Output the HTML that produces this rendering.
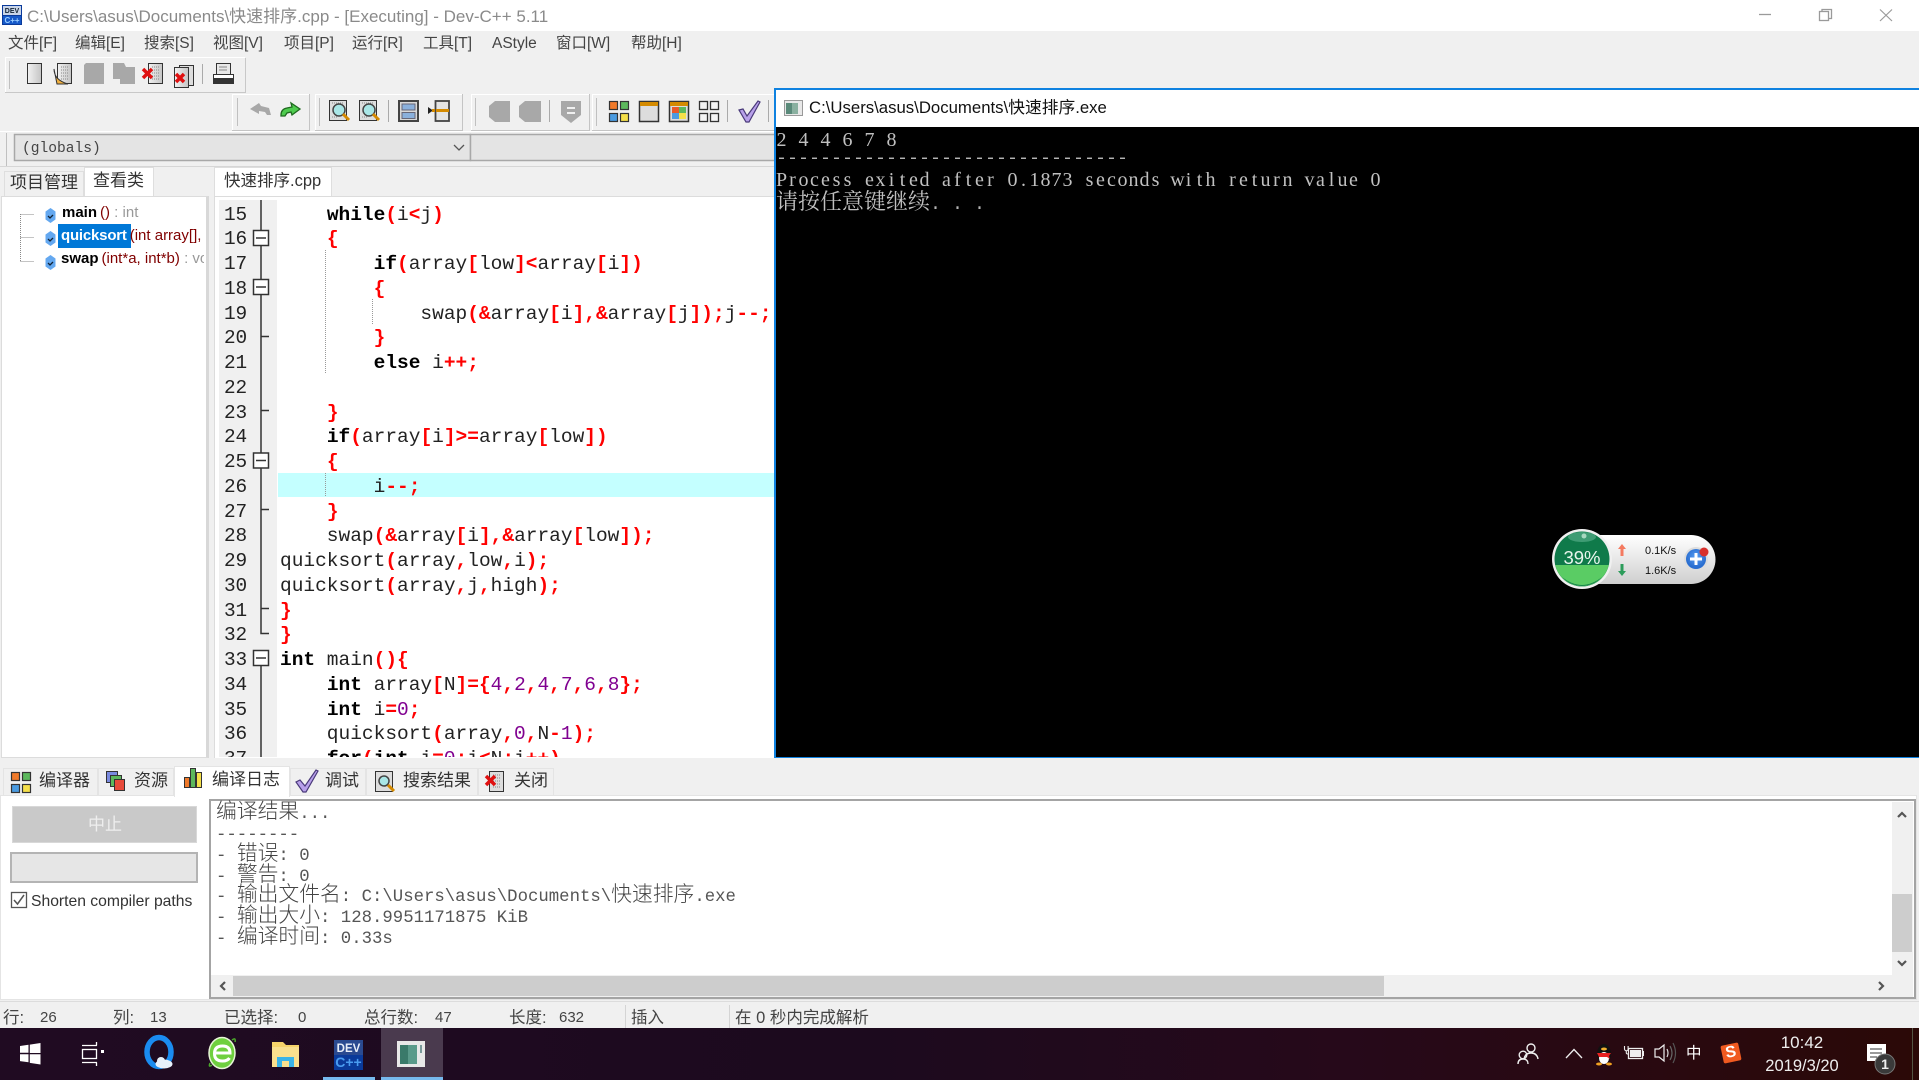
<!DOCTYPE html>
<html lang="zh"><head><meta charset="utf-8"><title>Dev-C++</title>
<style>
html,body{margin:0;padding:0;width:1919px;height:1080px;overflow:hidden;background:#f0f0f0}
body{position:relative;font-family:"Liberation Sans","Noto Sans CJK SC",sans-serif;color:#333}
.a{position:absolute;white-space:nowrap}
.t{position:absolute;white-space:nowrap;font-size:15.5px;line-height:20px;color:#444}
.tab{font-size:16.5px;color:#333}
.ln{position:absolute;left:224px;width:30px;font:19.4px/24.75px "Liberation Mono",monospace;color:#222;letter-spacing:-.1px}
.c{position:absolute;left:280px;white-space:pre;font:19.5px/24.75px "Liberation Mono",monospace;color:#222}
.c b{font-weight:bold;color:#000}.c i{font-style:normal;font-weight:bold;color:#f00}.c u{text-decoration:none;color:#800090}
.lg{position:absolute;left:216px;white-space:pre;font:17.33px/20.7px "Liberation Mono",monospace;color:#555}
.lg s{text-decoration:none;font-family:"Noto Sans CJK SC",sans-serif;font-size:20.8px;line-height:0;color:#444;font-weight:300}
.con{position:absolute;left:776px;white-space:pre;font:18.33px/22px "Liberation Mono",monospace;color:#b4b4b4}
.con s{text-decoration:none;font-family:"Noto Serif CJK SC",serif;font-size:22px;color:#c0c0c0}
.st{position:absolute;top:1007.500px;font-size:16.5px;line-height:20px;color:#444;white-space:nowrap}
.st.d{font-size:15px}
.box{position:absolute;box-sizing:border-box}
</style></head>
<body>
<!-- title bar -->
<div class="box" style="left:0;top:0;width:1919px;height:31px;background:#fff"></div>
<div class="t" style="left:27px;top:7px;font-size:17px;color:#8a8a8a">C:\Users\asus\Documents\快速排序.cpp - [Executing] - Dev-C++ 5.11</div>
<svg class="a" style="left:2px;top:5px" width="20" height="20"><rect width="20" height="20" fill="#0a3a9a"/><rect x="1" y="11" width="18" height="8" fill="#1659c9"/><rect x="1" y="1" width="18" height="9" fill="#c8d4e8"/><text x="10" y="8" font-size="7" font-weight="bold" fill="#123" text-anchor="middle" font-family="Liberation Sans">DEV</text><text x="10" y="18" font-size="8" font-weight="bold" fill="#9cf" text-anchor="middle" font-family="Liberation Sans">C++</text></svg>
<svg class="a" style="left:1750px;top:0" width="160" height="31" fill="none" stroke="#9a9a9a"><path d="M9 14.500h12" stroke-width="1.300"/><rect x="69.500" y="11.500" width="9" height="9" stroke-width="1.300"/><path d="M72 11V9.500h9.500V18.500H79" stroke-width="1.300"/><path d="M130 9.500l12 11.500M142 9.500l-12 11.500" stroke-width="1.200"/></svg>

<!-- menu -->
<div class="t" style="left:8px;top:34px">文件[F]</div><div class="t" style="left:75px;top:34px">编辑[E]</div><div class="t" style="left:144px;top:34px">搜索[S]</div><div class="t" style="left:213px;top:34px">视图[V]</div><div class="t" style="left:284px;top:34px">项目[P]</div><div class="t" style="left:352px;top:34px">运行[R]</div><div class="t" style="left:423px;top:34px">工具[T]</div><div class="t" style="left:492px;top:34px">AStyle</div><div class="t" style="left:556px;top:34px">窗口[W]</div><div class="t" style="left:631px;top:34px">帮助[H]</div>

<!-- toolbars -->
<svg class="a" style="left:0;top:0" width="800" height="170">
<defs>
<linearGradient id="dg" x1="0" x2="1"><stop offset="0" stop-color="#f2f2f2"/><stop offset="1" stop-color="#c4c4c4"/></linearGradient>
<g id="doc"><rect x=".5" y=".5" width="14" height="20" fill="url(#dg)" stroke="#333"/></g>
<g id="dots"><path d="M4 4h8M4 7h8M4 10h8M4 13h8M4 16h8" stroke="#888" stroke-dasharray="1 1"/></g>
<g id="dis"><path d="M0 2l2-2h18v21H0z" fill="#a8a8a8"/></g>
<g id="find"><rect x=".5" y=".5" width="17" height="20" fill="#ddd" stroke="#333"/><path d="M3 3h12M3 17h6" stroke="#888" stroke-dasharray="1 1"/><circle cx="10" cy="10" r="6" fill="#a9e6e6" stroke="#444" stroke-width="1.500"/><path d="M14 14l6 6" stroke="#d48a00" stroke-width="3"/></g>
</defs>
<!-- row 1 -->
<path d="M5.500 92V57.500H245" fill="none" stroke="#fff"/><path d="M5 92.500h240.500V58" fill="none" stroke="#c8c8c8"/>
<path d="M9.500 61v28" stroke="#c0c0c0"/>
<use href="#doc" x="27" y="63"/>
<g transform="translate(55,63)"><use href="#doc" x="2"/><use href="#dots" x="2"/><path d="M-1 6q0 11 14 15H2z" fill="#f0b040" stroke="#333"/></g>
<use href="#dis" x="84" y="63"/>
<g transform="translate(113,63)"><path d="M0 0h11l2 4h9v17H7v-5H0z" fill="#a8a8a8"/></g>
<g transform="translate(148,63)"><use href="#doc" x="0"/><use href="#dots"/><path d="M-5 6l9 9M4 6l-9 9" stroke="#e01010" stroke-width="3.500"/></g>
<g transform="translate(174,65)"><rect x="5.500" y=".5" width="14" height="20" fill="#ddd" stroke="#333"/><use href="#doc" x="0" y="2"/><path d="M2 9l8 8M10 9l-8 8" stroke="#e01010" stroke-width="3.500"/></g>
<path d="M202.500 64v20" stroke="#aaa"/>
<g transform="translate(213,63)" stroke="#333" fill="#ddd"><rect x="3.500" y=".5" width="14" height="11" fill="#e8e8e8"/><path d="M6 4h8M6 7h8" stroke="#888"/><rect x=".5" y="11.500" width="20" height="8" fill="#fff"/><rect x=".5" y="15.500" width="20" height="5" fill="#333"/></g>
<!-- row 2 groups -->
<g fill="none"><path d="M232.500 130V94.500H309" stroke="#fff"/><path d="M232 130.500h77.500V94" stroke="#c4c4c4"/><path d="M237.500 98v28" stroke="#c0c0c0"/>
<path d="M315.500 130V94.500H462" stroke="#fff"/><path d="M315 130.500h147.500V94" stroke="#c4c4c4"/><path d="M319.500 98v28" stroke="#c0c0c0"/>
<path d="M471.500 130V94.500H589" stroke="#fff"/><path d="M471 130.500h118.500V94" stroke="#c4c4c4"/><path d="M475.500 98v28" stroke="#c0c0c0"/>
<path d="M592.500 130V94.500H775" stroke="#fff"/><path d="M592 130.500h183" stroke="#c4c4c4"/><path d="M596.500 98v28" stroke="#c0c0c0"/></g>
<path d="M250 109l9-6 2 3 8 2 2 7-4 0-2-3-6-1 0 3z" fill="#a8a8a8"/>
<path d="M281 115q0-6 6-7l5-1-1-4 9 6-8 6-1-3-4 1-2 3-4 0z" fill="#4ecb4e" stroke="#1f6a1f" stroke-width="1.300"/>
<use href="#find" x="329" y="100"/><use href="#find" x="359" y="100"/>
<path d="M388.500 100v22" stroke="#aaa"/>
<g transform="translate(398,100)"><rect x="1" y="1" width="19" height="20" fill="#d8d8d8" stroke="#444" stroke-width="2"/><rect x="4" y="4" width="13" height="6" fill="#8ab0dc" stroke="#667"/><rect x="4" y="12.500" width="13" height="6" fill="#8ab0dc" stroke="#667"/></g>
<g transform="translate(428,100)"><rect x="7.500" y="1" width="13.500" height="20" fill="#e4e4e4" stroke="#444" stroke-width="1.800"/><rect x="8" y="9" width="13" height="3" fill="#d48a00"/><path d="M0 7l5 3.500-5 3.500z" fill="#222"/><rect x="4" y="9" width="3" height="3" fill="#d48a00"/></g>
<path d="M489 106l6-5h15v21h-15l-6-5z" fill="#a8a8a8"/><path d="M519 106l6-5h16v21h-16l-6-5z" fill="#a8a8a8"/>
<path d="M549.500 100v22" stroke="#aaa"/>
<path d="M561 101h20v14l-10 8-10-8z" fill="#a8a8a8"/><path d="M567 108h8M567 113h8" stroke="#f0f0f0" stroke-width="2"/>
<!-- view icons -->
<g stroke="#333" stroke-width="1.200"><rect x="609.500" y="101.500" width="8" height="8" fill="#f07a2a"/><rect x="620.500" y="101.500" width="8" height="8" fill="#5cb85c"/><rect x="609.500" y="113.500" width="8" height="8" fill="#4a9be0"/><rect x="620.500" y="113.500" width="8" height="8" fill="#f5e04a"/></g>
<rect x="639.500" y="101.500" width="19" height="20" fill="#ddd" stroke="#333" stroke-width="1.500"/><rect x="640" y="102" width="18" height="4" fill="#d48a00"/>
<rect x="669.500" y="101.500" width="19" height="20" fill="#ddd" stroke="#333" stroke-width="1.500"/><rect x="670" y="102" width="18" height="4" fill="#d48a00"/><rect x="672" y="107" width="7" height="6" fill="#e85a2a"/><rect x="679" y="107" width="7" height="6" fill="#5cb85c"/><rect x="672" y="113" width="7" height="6" fill="#4a9be0"/><rect x="679" y="113" width="7" height="6" fill="#f5e04a"/>
<g fill="#f4f4f4" stroke="#333" stroke-width="1.300"><rect x="699.500" y="101.500" width="8" height="8"/><rect x="710.500" y="101.500" width="8" height="8"/><rect x="699.500" y="113.500" width="8" height="8"/><rect x="710.500" y="113.500" width="8" height="8"/></g>
<path d="M727.500 100v22" stroke="#aaa"/>
<path d="M739 110l4-1 4 7 11-15 2 1-11 20h-3z" fill="#b8a0ea" stroke="#4a3a7a" stroke-width="1.200"/>
<path d="M768.500 100v22" stroke="#aaa"/>
<!-- row 3 -->
<path d="M6.500 133v33" stroke="#c0c0c0"/><path d="M0 131.500h800" stroke="#fff"/><path d="M0 166.500h800" stroke="#d6d6d6"/>
<rect x="14.500" y="134.500" width="456" height="26" fill="#e4e4e4" stroke="#a8a8a8" stroke-width="1.500"/>
<rect x="470.500" y="134.500" width="310" height="26" fill="#e4e4e4" stroke="#a8a8a8" stroke-width="1.500"/>
<path d="M454 145l5 5 5-5" fill="none" stroke="#555" stroke-width="1.300"/>
<!-- panel tab arrows -->
<rect x="162.500" y="170.500" width="22" height="22" fill="#e4e4e4" stroke="#adadad"/><rect x="184.500" y="170.500" width="22" height="22" fill="#e4e4e4" stroke="#adadad"/>
<path d="M175 178v7l-4-3.500zM192 178v7l4-3.500z" fill="#111"/>
</svg>
<div class="a" style="left:22px;top:140px;font:14.6px/18px 'Liberation Mono',monospace;color:#444">(globals)</div>

<!-- tabs upper -->
<div class="box" style="left:4px;top:171px;width:80px;height:26px;background:#f0f0f0;border:1px solid #dedede;border-bottom:0"></div>
<div class="box" style="left:84px;top:167px;width:70px;height:31px;background:#fff;border:1px solid #dedede;border-bottom:0"></div>
<div class="box" style="left:214px;top:167px;width:118px;height:31px;background:#fff;border:1px solid #dedede;border-bottom:0"></div>
<div class="t tab" style="left:10px;top:173px;font-size:17px">项目管理</div>
<div class="t tab" style="left:93px;top:171px;font-size:17px">查看类</div>
<div class="t tab" style="left:224px;top:171px;font-size:16.5px">快速排序.cpp</div>

<!-- class panel -->
<div class="box" style="left:1px;top:196px;width:208px;height:562px;background:#fff;border:1px solid #dcdcdc;border-right:3px solid #d8d8d8;z-index:0"></div>
<svg class="a" style="left:0;top:196px" width="210" height="80">
<path d="M20.500 18v47M20.500 18.500H34M20.500 41.500H34M20.500 65.500H34" stroke="#888" stroke-dasharray="1 1" fill="none"/>
<g><path d="M50.500 12l5 3.500v8l-5 3.500-5-3.500v-8z" fill="#64a8f0"/><path d="M48 20l2 2 3-3" stroke="#123" fill="none" stroke-width="1.300"/></g>
<g transform="translate(0,23)"><path d="M50.500 12l5 3.500v8l-5 3.500-5-3.500v-8z" fill="#64a8f0"/><path d="M48 20l2 2 3-3" stroke="#123" fill="none" stroke-width="1.300"/></g>
<g transform="translate(0,47)"><path d="M50.500 12l5 3.500v8l-5 3.500-5-3.500v-8z" fill="#64a8f0"/><path d="M48 20l2 2 3-3" stroke="#123" fill="none" stroke-width="1.300"/></g>
</svg>
<div class="box" style="left:58px;top:224px;width:73px;height:24px;background:#0078d7"></div>
<div class="a" style="left:62px;top:204px;width:142px;overflow:hidden;font-size:15px;line-height:18px;color:#999"><b style="color:#000">main</b><span style="color:#800000;margin-left:3px">()</span> : int</div>
<div class="a" style="left:61px;top:227px;width:143px;overflow:hidden;font-size:15px;line-height:18px;color:#800000"><b style="color:#fff;letter-spacing:-.2px">quicksort</b><span style="margin-left:3px">(int array[],</span></div>
<div class="a" style="left:61px;top:250px;width:143px;overflow:hidden;font-size:15px;line-height:18px;color:#800000"><b style="color:#000">swap</b><span style="margin-left:3px">(int*a, int*b)</span> <span style="color:#999">: void</span></div>

<!-- editor -->
<div class="box" style="left:214px;top:196px;width:562px;height:562px;background:#fff;border-top:1px solid #dcdcdc;border-left:1px solid #dcdcdc"></div>
<div class="box" style="left:219px;top:200px;width:58px;height:557px;background:#f0f0f0"></div>
<div class="box" style="left:278px;top:473px;width:497px;height:24px;background:#c4ffff"></div>
<div class="box" style="left:214px;top:200px;width:561px;height:557px;overflow:hidden">
 <div style="position:absolute;left:-214px;top:-199px;width:1000px;height:1000px">
 <div class="ln" style="top:201.600px">15</div><div class="ln" style="top:226.350px">16</div><div class="ln" style="top:251.100px">17</div><div class="ln" style="top:275.850px">18</div><div class="ln" style="top:300.600px">19</div><div class="ln" style="top:325.350px">20</div><div class="ln" style="top:350.100px">21</div><div class="ln" style="top:374.850px">22</div><div class="ln" style="top:399.600px">23</div><div class="ln" style="top:424.350px">24</div><div class="ln" style="top:449.100px">25</div><div class="ln" style="top:473.850px">26</div><div class="ln" style="top:498.600px">27</div><div class="ln" style="top:523.350px">28</div><div class="ln" style="top:548.100px">29</div><div class="ln" style="top:572.850px">30</div><div class="ln" style="top:597.600px">31</div><div class="ln" style="top:622.350px">32</div><div class="ln" style="top:647.100px">33</div><div class="ln" style="top:671.850px">34</div><div class="ln" style="top:696.600px">35</div><div class="ln" style="top:721.350px">36</div><div class="ln" style="top:746.100px">37</div>
 <div class="c" style="top:201.600px">    <b>while</b><i>(</i>i<i>&lt;</i>j<i>)</i></div>
 <div class="c" style="top:226.350px">    <i>{</i></div>
 <div class="c" style="top:251.100px">        <b>if</b><i>(</i>array<i>[</i>low<i>]&lt;</i>array<i>[</i>i<i>])</i></div>
 <div class="c" style="top:275.850px">        <i>{</i></div>
 <div class="c" style="top:300.600px">            swap<i>(&amp;</i>array<i>[</i>i<i>],&amp;</i>array<i>[</i>j<i>]);</i>j<i>--;</i></div>
 <div class="c" style="top:325.350px">        <i>}</i></div>
 <div class="c" style="top:350.100px">        <b>else</b> i<i>++;</i></div>
 <div class="c" style="top:399.600px">    <i>}</i></div>
 <div class="c" style="top:424.350px">    <b>if</b><i>(</i>array<i>[</i>i<i>]&gt;=</i>array<i>[</i>low<i>])</i></div>
 <div class="c" style="top:449.100px">    <i>{</i></div>
 <div class="c" style="top:473.850px">        i<i>--;</i></div>
 <div class="c" style="top:498.600px">    <i>}</i></div>
 <div class="c" style="top:523.350px">    swap<i>(&amp;</i>array<i>[</i>i<i>],&amp;</i>array<i>[</i>low<i>]);</i></div>
 <div class="c" style="top:548.100px">quicksort<i>(</i>array<i>,</i>low<i>,</i>i<i>);</i></div>
 <div class="c" style="top:572.850px">quicksort<i>(</i>array<i>,</i>j<i>,</i>high<i>);</i></div>
 <div class="c" style="top:597.600px"><i>}</i></div>
 <div class="c" style="top:622.350px"><i>}</i></div>
 <div class="c" style="top:647.100px"><b>int</b> main<i>(){</i></div>
 <div class="c" style="top:671.850px">    <b>int</b> array<i>[</i>N<i>]={</i><u>4</u><i>,</i><u>2</u><i>,</i><u>4</u><i>,</i><u>7</u><i>,</i><u>6</u><i>,</i><u>8</u><i>};</i></div>
 <div class="c" style="top:696.600px">    <b>int</b> i<i>=</i><u>0</u><i>;</i></div>
 <div class="c" style="top:721.350px">    quicksort<i>(</i>array<i>,</i><u>0</u><i>,</i>N<i>-</i><u>1</u><i>);</i></div>
 <div class="c" style="top:746.100px">    <b>for</b><i>(</i><b>int</b> i<i>=</i><u>0</u><i>;</i>i<i>&lt;</i>N<i>;</i>i<i>++)</i></div>
 </div>
</div>
<svg class="a" style="left:0;top:0" width="400" height="760">
<g stroke="#333" stroke-width="1.500" fill="none">
<path d="M261 200V633.500h8"/>
<path d="M261 666V757"/>
<path d="M261 336.500h8M261 410.500h8M261 509.500h8M261 608.500h8"/>
</g>
<g stroke="#333" stroke-width="1.500" fill="#fff">
<rect x="253.500" y="230.500" width="15" height="15"/><rect x="253.500" y="279.500" width="15" height="15"/><rect x="253.500" y="453" width="15" height="15"/><rect x="253.500" y="650.500" width="15" height="15"/>
<path d="M256 238h10M256 287h10M256 460.500h10M256 658h10"/>
</g>
<g stroke="#999" stroke-dasharray="1 1" fill="none"><path d="M325.500 250v123M372.500 299v25M325.500 473v24"/></g>
</svg>

<!-- console -->
<div class="box" style="left:774px;top:88px;width:1145px;height:670px;background:#000;border-left:2px solid #0f82e0;border-top:2px solid #0f82e0;border-bottom:1px solid #0f82e0"></div>
<div class="box" style="left:776px;top:90px;width:1143px;height:37px;background:#fff"></div>
<svg class="a" style="left:784px;top:100px" width="20" height="17"><rect x=".5" y=".5" width="18" height="15" fill="#e8e8e8" stroke="#999"/><rect x="2" y="3" width="12" height="11" fill="#8ab0a0"/><rect x="2" y="3" width="6" height="11" fill="#5a8a7a"/></svg>
<div class="t" style="left:809px;top:98px;font-size:16.75px;color:#111">C:\Users\asus\Documents\快速排序.exe</div>
<svg class="a" style="left:776px;top:128px" width="700" height="70" font-family="Liberation Serif" font-size="20" fill="#c0c0c0" text-anchor="middle">
<text y="18" x="5.500 16.500 27.500 38.500 49.500 60.500 71.500 82.500 93.500 104.500 115.500">2 4 4 6 7 8</text>
<text y="58" x="5.500 16.500 27.500 38.500 49.500 60.500 71.500 82.500 93.500 104.500 115.500 126.500 137.500 148.500 159.500 170.500 181.500 192.500 203.500 214.500 225.500 236.500 247.500 258.500 269.500 280.500 291.500 302.500 313.500 324.500 335.500 346.500 357.500 368.500 379.500 390.500 401.500 412.500 423.500 434.500 445.500 456.500 467.500 478.500 489.500 500.500 511.500 522.500 533.500 544.500 555.500 566.500 577.500 588.500 599.500">Process exited after 0.1873 seconds with return value 0</text>
</svg>
<div class="con" style="top:148px">--------------------------------</div>
<div class="con" style="top:190px"><s>请按任意键继续</s>. . .</div>

<!-- widget -->
<svg class="a" style="left:1545px;top:525px" width="180" height="70">
<defs><linearGradient id="pg" x1="0" x2="0" y1="0" y2="1"><stop offset="0" stop-color="#fff"/><stop offset="1" stop-color="#cfcfcf"/></linearGradient>
<radialGradient id="pb" cx=".5" cy=".4"><stop offset="0" stop-color="#5aa0f5"/><stop offset="1" stop-color="#2a6ed0"/></radialGradient></defs>
<path d="M37 10h109a24.500 24.500 0 0 1 0 49H37z" fill="url(#pg)"/>
<circle cx="37" cy="34" r="30" fill="#f0f0f0"/><circle cx="37" cy="34" r="27.500" fill="#0f7a4a"/>
<path d="M10.200 40A27.500 27.500 0 0 0 63.800 40z" fill="#5acc64"/><path d="M17 52q20 16 40 0a27 27 0 0 1-40 0z" fill="#0f7a4a"/>
<ellipse cx="37" cy="12" rx="14" ry="5" fill="#3f9c74"/><circle cx="39" cy="11" r="2.500" fill="#a8d8c0"/>
<text x="37" y="39" font-size="18.500" fill="#e8f5ec" text-anchor="middle" font-family="Liberation Sans">39%</text>
<path d="M77 19l-4 5h2.500v7h3v-7H81z" fill="#f47a60"/><path d="M77 51l-4-5h2.500v-7h3v7H81z" fill="#2c9c5a"/>
<text x="100" y="29" font-size="11" fill="#111" font-family="Liberation Sans">0.1K/s</text>
<text x="100" y="49" font-size="11" fill="#111" font-family="Liberation Sans">1.6K/s</text>
<circle cx="151" cy="34" r="12" fill="#ddd"/><circle cx="151" cy="34" r="10" fill="url(#pb)"/><path d="M151 28v12M145 34h12" stroke="#fff" stroke-width="3"/>
<circle cx="159" cy="27" r="4.500" fill="#d8302c"/>
</svg>

<!-- bottom tabs -->
<div class="box" style="left:0;top:758px;width:1919px;height:247px;background:#f0f0f0"></div>
<div class="box" style="left:3px;top:768px;width:95px;height:28px;background:#f0f0f0;border:1px solid #e4e4e4"></div>
<div class="box" style="left:98px;top:768px;width:76px;height:28px;background:#f0f0f0;border:1px solid #e4e4e4"></div>
<div class="box" style="left:290px;top:768px;width:76px;height:28px;background:#f0f0f0;border:1px solid #e4e4e4"></div>
<div class="box" style="left:366px;top:768px;width:112px;height:28px;background:#f0f0f0;border:1px solid #e4e4e4"></div>
<div class="box" style="left:478px;top:768px;width:76px;height:28px;background:#f0f0f0;border:1px solid #e4e4e4"></div>
<div class="box" style="left:0;top:795px;width:1917px;height:205px;background:#fff;border:1px solid #e4e4e4"></div>
<div class="box" style="left:174px;top:766px;width:116px;height:31px;background:#fff;border:1px solid #e4e4e4;border-bottom:0"></div>
<div class="t tab" style="left:39px;top:771px;font-size:17px">编译器</div>
<div class="t tab" style="left:134px;top:771px;font-size:17px">资源</div>
<div class="t tab" style="left:212px;top:770px;font-size:17px">编译日志</div>
<div class="t tab" style="left:325px;top:771px;font-size:17px">调试</div>
<div class="t tab" style="left:403px;top:771px;font-size:17px">搜索结果</div>
<div class="t tab" style="left:514px;top:771px;font-size:17px">关闭</div>
<svg class="a" style="left:0;top:760px" width="560" height="40">
<g stroke="#333" stroke-width="1.200"><rect x="11.500" y="12.500" width="8" height="8" fill="#f07a2a"/><rect x="22.500" y="12.500" width="8" height="8" fill="#5cb85c"/><rect x="11.500" y="24.500" width="8" height="8" fill="#4a9be0"/><rect x="22.500" y="24.500" width="8" height="8" fill="#f5e04a"/></g>
<g stroke="#333"><rect x="106.500" y="11.500" width="11" height="11" fill="#7a8ae0"/><rect x="110.500" y="15.500" width="11" height="11" fill="#5cb85c"/><rect x="114.500" y="19.500" width="10" height="11" fill="#e84a3a"/></g>
<g stroke="#333"><rect x="184.500" y="17.500" width="5" height="10" fill="#f07a2a"/><rect x="190.500" y="8.500" width="5" height="19" fill="#5cb85c"/><rect x="196.500" y="12.500" width="5" height="15" fill="#f5e04a"/></g>
<path d="M296 22l4-2 5 6 11-16 2 1-12 21h-3z" fill="#b8a0ea" stroke="#4a3a7a" stroke-width="1.200"/>
<g transform="translate(375,11)"><rect x=".5" y=".5" width="17" height="20" fill="#ddd" stroke="#333"/><circle cx="9" cy="10" r="5" fill="#a9e6e6" stroke="#444" stroke-width="1.500"/><path d="M13 14l6 6" stroke="#d48a00" stroke-width="3"/></g>
<g transform="translate(486,11)"><rect x="3.500" y=".5" width="14" height="20" fill="#ddd" stroke="#333"/><path d="M7 4h8M7 7h8M7 10h8M7 13h8M7 16h8" stroke="#888" stroke-dasharray="1 1"/><path d="M0 5l9 9M9 5l-9 9" stroke="#e01010" stroke-width="3.500"/></g>
</svg>

<!-- compiler left -->
<div class="box" style="left:12px;top:806px;width:185px;height:37px;background:#c9c9c9;border:1px solid #d8d8d8"></div>
<div class="t" style="left:88px;top:815px;font-size:17px;color:#eee">中止</div>
<div class="box" style="left:10px;top:852px;width:188px;height:31px;background:#e6e6e6;border:2px solid #b4b4b4"></div>
<svg class="a" style="left:10px;top:891px" width="20" height="20"><rect x="1.500" y="1.500" width="15" height="15" fill="#fff" stroke="#555" stroke-width="1.300"/><path d="M4 9l3.500 4L14 4" fill="none" stroke="#555" stroke-width="1.500"/></svg>
<div class="t" style="left:31px;top:891.500px;font-size:15.7px;color:#333">Shorten compiler paths</div>

<!-- log box -->
<div class="box" style="left:209px;top:799px;width:1707px;height:200px;background:#fff;border:2px solid #a4a4a4"></div>
<div class="lg" style="top:805.200px"><s>编译结果</s>...</div>
<div class="lg" style="top:826px">--------</div>
<div class="lg" style="top:846.800px">- <s>错误</s>: 0</div>
<div class="lg" style="top:867.600px">- <s>警告</s>: 0</div>
<div class="lg" style="top:888.400px">- <s>输出文件名</s>: C:\Users\asus\Documents\<s>快速排序</s>.exe</div>
<div class="lg" style="top:909.200px">- <s>输出大小</s>: 128.9951171875 KiB</div>
<div class="lg" style="top:930px">- <s>编译时间</s>: 0.33s</div>
<div class="box" style="left:1892px;top:802px;width:21px;height:195px;background:#f0f0f0"></div>
<div class="box" style="left:211px;top:975px;width:1702px;height:22px;background:#f0f0f0"></div>
<div class="box" style="left:1892px;top:894px;width:20px;height:58px;background:#cdcdcd"></div>
<div class="box" style="left:233px;top:976px;width:1151px;height:20px;background:#cdcdcd"></div>
<svg class="a" style="left:0;top:800px" width="1919" height="200" fill="none" stroke="#555" stroke-width="2.200">
<path d="M1898 17l4-4 4 4M1898 161l4 4 4-4M225 182l-4 4 4 4M1879 182l4 4-4 4"/>
</svg>

<!-- status bar -->
<div class="box" style="left:0;top:1001px;width:1919px;height:27px;background:#f0f0f0;border-top:1px solid #dcdcdc"></div>
<div class="st" style="left:3px">行:</div><div class="st d" style="left:40px">26</div>
<div class="st" style="left:113px">列:</div><div class="st d" style="left:150px">13</div>
<div class="st" style="left:224px">已选择:</div><div class="st d" style="left:298px">0</div>
<div class="st" style="left:364px">总行数:</div><div class="st d" style="left:435px">47</div>
<div class="st" style="left:509px">长度:</div><div class="st d" style="left:559px">632</div>
<div class="st" style="left:631px">插入</div>
<div class="st" style="left:735px">在 0 秒内完成解析</div>
<div class="box" style="left:625px;top:1005px;width:1px;height:23px;background:#d4d4d4"></div>
<div class="box" style="left:729px;top:1005px;width:1px;height:23px;background:#d4d4d4"></div>

<!-- taskbar -->
<div class="box" style="left:0;top:1028px;width:1919px;height:52px;background:linear-gradient(90deg,#200b22 0%,#1c0a1e 45%,#26091a 70%,#2b0907 100%)"></div>
<div class="box" style="left:381px;top:1028px;width:62px;height:52px;background:#4a3a4e"></div>
<div class="box" style="left:323px;top:1077px;width:52px;height:3px;background:#76b9ed"></div>
<div class="box" style="left:381px;top:1077px;width:62px;height:3px;background:#76b9ed"></div>
<svg class="a" style="left:0;top:1028px" width="460" height="52">
<path d="M20 18l8.500-1.200v8H20zM29.800 16.600L40.500 15v10H29.800zM20 26.300h8.500v8L20 33.100zM29.800 26.300h10.700v10.200l-10.700-1.600z" fill="#fff"/>
<g fill="none" stroke="#fff" stroke-width="1.300"><rect x="82.500" y="21.500" width="14" height="9"/><path d="M82 17.500h15M96.500 14v3.500M82 34.500h15M96.500 34.500V38"/></g><rect x="101" y="22" width="3" height="3" fill="#fff"/>
<ellipse cx="159" cy="24" rx="12" ry="14.500" fill="none" stroke="#1a8cf0" stroke-width="5.500"/><ellipse cx="164" cy="36" rx="8.500" ry="4.500" fill="#e8f2fb"/><circle cx="161" cy="33" r="4" fill="#e8f2fb"/>
<ellipse cx="222" cy="25" rx="13" ry="15.500" fill="#6fd03f" stroke="#e8f5d8" stroke-width="1.500"/><path d="M214 25h16q0-7-7.500-7-8 0-8 7.500 0 7.500 8 7.500 5 0 7-3" fill="none" stroke="#fff" stroke-width="3"/><path d="M212 37q-4 3-2-2M232 12q4-3 3 2" fill="none" stroke="#4aa82a" stroke-width="1.500"/>
<path d="M272 14h11l3 3h13v22h-27z" fill="#f6d36a"/><rect x="272" y="19" width="27" height="20" fill="#f9e08e"/><rect x="277" y="29" width="17" height="10" fill="#3ab4e8"/><rect x="282" y="33" width="7" height="6" fill="#f9e08e"/>
<rect x="334" y="12" width="29" height="30" fill="#0a3a9a"/><rect x="334" y="12" width="29" height="15" fill="#2a4a90"/>
<text x="348.500" y="24" font-size="11.500" font-weight="bold" fill="#e8eef8" text-anchor="middle" font-family="Liberation Sans">DEV</text><text x="348.500" y="39" font-size="14" font-weight="bold" fill="#4a9cf0" text-anchor="middle" font-family="Liberation Sans">C++</text>
<rect x="397" y="13" width="28" height="26" fill="#e8e8e8"/><rect x="400" y="17" width="17" height="19" fill="#5a9a8a"/><rect x="400" y="17" width="8" height="19" fill="#3a7a6a"/><rect x="420" y="17" width="2" height="8" fill="#7a9a9a"/>
</svg>
<svg class="a" style="left:1500px;top:1028px" width="419" height="52">
<g fill="none" stroke="#eee" stroke-width="1.400" transform="translate(0,9)"><circle cx="31" cy="11" r="4"/><path d="M24 22q1-6 7-6 6 0 7 6"/><circle cx="23" cy="18" r="3.800"/><path d="M18 27q0-5 5-5 5 0 5 5"/></g>
<path d="M66 30l8-8.500 8 8.500" fill="none" stroke="#eee" stroke-width="1.300"/>
<g transform="translate(0,9)"><ellipse cx="104" cy="17" rx="7" ry="10" fill="#111"/><ellipse cx="104" cy="21" rx="5" ry="6" fill="#fff"/><path d="M97 16h14l-2 3 1 3-3-2h-8z" fill="#e82020"/><ellipse cx="104" cy="12" rx="3" ry="1.500" fill="#f0b030"/><ellipse cx="99" cy="27" rx="3" ry="1.500" fill="#f0a020"/><ellipse cx="109" cy="27" rx="3" ry="1.500" fill="#f0a020"/></g>
<rect x="128.500" y="20.500" width="14" height="10" fill="none" stroke="#eee" stroke-width="1.300"/><rect x="130" y="22" width="11" height="7" fill="#eee"/><rect x="142.500" y="23" width="1.500" height="5" fill="#eee"/><path d="M124.500 18v3a1.800 1.800 0 0 0 3.600 0v-3M126.300 23v2q0 1 2 1" fill="none" stroke="#eee" stroke-width="1.100"/>
<g transform="translate(0,6)"><path d="M155 15h4l5-4v16l-5-4h-4z" fill="none" stroke="#eee" stroke-width="1.200"/><path d="M167 15q2 4 0 8" fill="none" stroke="#ddd" stroke-width="1.200"/><path d="M170 12q4 7 0 14" fill="none" stroke="#666" stroke-width="1.200"/><path d="M173 9q5 10 0 20" fill="none" stroke="#555" stroke-width="1.200"/></g>
<g transform="rotate(-12 231 25)"><rect x="222" y="16" width="18" height="18" rx="2" fill="#f05a20"/></g>
</svg>
<div class="a" style="left:1686px;top:1045px;font-size:15.500px;line-height:18px;color:#fff">中</div>
<div class="a" style="left:1722px;top:1044px;width:18px;text-align:center;font-size:16px;line-height:18px;font-weight:bold;color:#fff;transform:rotate(-10deg)">S</div>
<div class="a" style="left:1752px;top:1032px;width:100px;text-align:center;font-size:17px;line-height:22px;color:#eee">10:42</div>
<div class="a" style="left:1752px;top:1055px;width:100px;text-align:center;font-size:16.5px;line-height:22px;color:#eee">2019/3/20</div>
<svg class="a" style="left:1860px;top:1038px" width="50" height="40">
<path d="M7 6h19v17H7z" fill="#fff"/><path d="M10 11h12M10 15h12M10 19h7" stroke="#333"/>
<circle cx="25" cy="26" r="10" fill="#3a3a3a" stroke="#777"/><text x="25" y="31" font-size="14" font-weight="bold" fill="#eee" text-anchor="middle" font-family="Liberation Sans">1</text>
</svg>
<div class="box" style="left:1912px;top:1028px;width:1px;height:52px;background:#554"></div>
</body></html>
